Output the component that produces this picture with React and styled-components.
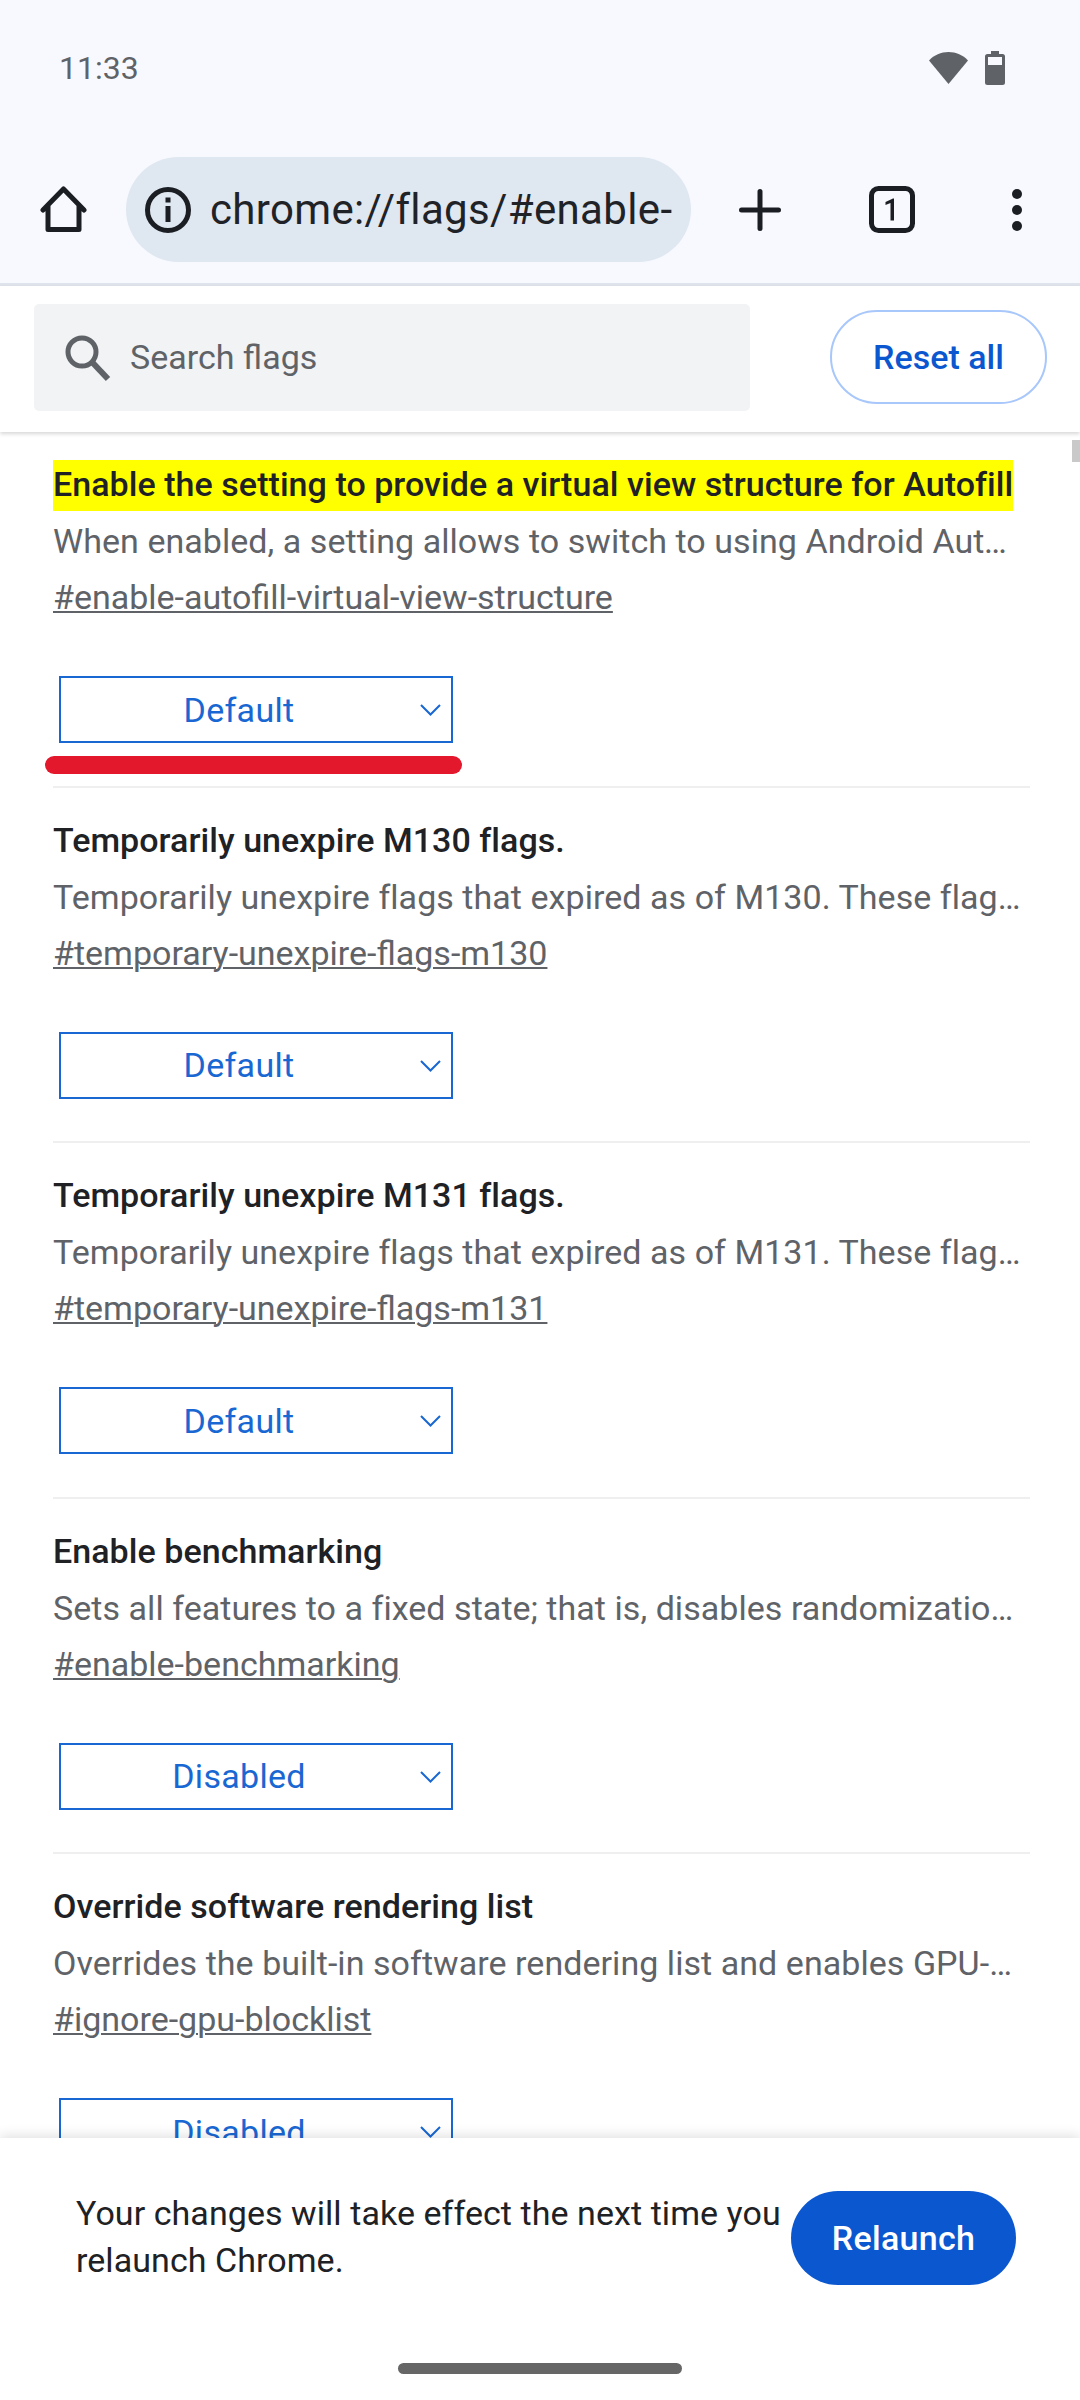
import React from "react";
import styled, { createGlobalStyle } from "styled-components";

const Global = createGlobalStyle`
  html, body { margin: 0; padding: 0; background: #fff; }
  * { box-sizing: border-box; }
  body { font-family: Roboto, "Liberation Sans", sans-serif; }
`;

const Screen = styled.div`
  width: 1080px; height: 2400px; display: flex; flex-direction: column;
  overflow: hidden; background: #fff; position: relative;
`;
const Chrome = styled.header`
  height: 286px; flex: none; background: #f8f9ff; border-bottom: 3px solid #dfe3ec;
  display: flex; flex-direction: column; position: relative; z-index: 2;
`;
const StatusBar = styled.div`
  height: 136px; flex: none; display: flex; justify-content: space-between; align-items: flex-start;
  padding: 46px 75px 0 59px;
`;
const Time = styled.span`font-size: 32px; line-height: 44px; color: #5f6368;`;
const StatusIcons = styled.div`display: flex; align-items: center; gap: 17px; height: 44px;`;
const Toolbar = styled.div`
  display: flex; align-items: center; height: 105px; margin-top: 21px; padding-left: 40px;
`;
const Pill = styled.div`
  width: 565px; height: 105px; margin-left: 39px; border-radius: 53px; background: #dfe7f0;
  display: flex; align-items: center; padding-left: 19px; gap: 19px; overflow: hidden;
`;
const Url = styled.span`font-size: 42px; line-height: 48px; color: #1f2328; white-space: nowrap; letter-spacing: 0.35px;`;
const PlusSlot = styled.div`margin-left: 48px; display: flex;`;
const TabSlot = styled.div`margin-left: 88px; display: flex;`;
const MenuSlot = styled.div`margin-left: 96px; display: flex;`;

const SearchHeader = styled.div`
  height: 146px; flex: none; background: #fff; display: flex; align-items: flex-start;
  padding: 18px 33px 0 34px; box-shadow: 0 2px 4px rgba(0,0,0,.16); position: relative; z-index: 2;
`;
const SearchBox = styled.div`
  width: 716px; height: 107px; background: #f1f3f4; border-radius: 5px;
  display: flex; align-items: center; padding-left: 30px; gap: 18px;
`;
const SearchLabel = styled.span`font-size: 34px; color: #5f6368; line-height: 38px; padding-bottom: 2px;`;
const ResetButton = styled.button`
  margin: 6px 0 0 auto; width: 217px; height: 94px; border-radius: 47px; background: #fff;
  border: 2px solid #a8c7fa; color: #0b57d0; font: 500 34px Roboto, sans-serif; padding: 0;
`;

const Main = styled.main`flex: 1; min-height: 0; overflow: hidden; position: relative; padding: 0 50px 0 53px;`;
const Thumb = styled.div`position: absolute; right: 0; top: 8px; width: 8px; height: 22px; background: #c9c9c9;`;
const Row = styled.article`
  height: 355.5px; padding-top: 28px; border-bottom: 2px solid #efefef; position: relative;
  &:last-child { border: 0; }
`;
const Title = styled.h3`
  margin: 0; font-size: 34px; font-weight: 500; line-height: 49px; color: #202124; height: 51px;
  letter-spacing: .05px;
  & mark { background: #ff0; color: inherit; display: inline-block; white-space: nowrap; padding-bottom: 2px; }
`;
const Desc = styled.p`
  margin: 5px 0 0; width: 970px; font-size: 34px; line-height: 50px; color: #5f6368; height: 50px;
  white-space: nowrap; overflow: hidden; text-overflow: ellipsis; letter-spacing: .05px;
`;
const Link = styled.a`
  display: inline-block; margin-top: 6px; font-size: 34px; line-height: 50px; color: #5f6368;
  text-decoration: underline; text-decoration-thickness: 2px; text-underline-offset: 2px;
`;
const SelectWrap = styled.div`position: absolute; left: 6px; top: 244px;`;
const Select = styled.div`
  width: 394px; height: 67px; border: 2px solid #1967d2; background: #fff; color: #1967d2;
  display: flex; align-items: center; position: relative; font-size: 34px; padding-right: 34px;
  justify-content: center; letter-spacing: .3px;
`;
const Caret = styled.svg`position: absolute; right: 10px; top: 26px; width: 21px; height: 12px;`;
const RedMark = styled.div`
  position: absolute; left: -14px; top: 80px; width: 417px; height: 18px; background: #e3182d; border-radius: 9px;
`;

const Footer = styled.footer`
  height: 262px; flex: none; background: #fff; position: relative; z-index: 2;
  box-shadow: 0 -2px 12px rgba(0,0,0,.13); padding: 0 64px 0 76px;
  display: flex; align-items: flex-start;
`;
const Notice = styled.p`margin: 52px 0 0; width: 715px; font-size: 34px; line-height: 47px; color: #202124; flex: none; white-space: nowrap; letter-spacing: .06px;`;
const Relaunch = styled.button`
  margin: 53px 0 0 auto; width: 225px; height: 94px; border: 0; border-radius: 47px;
  background: #0b57d0; color: #fff; font: 500 34px Roboto, sans-serif; padding: 0; letter-spacing: .3px;
`;
const HomeBar = styled.div`
  position: absolute; left: 398px; top: 225px; width: 284px; height: 11px; border-radius: 6px; background: #666;
`;

const flags = [
  { t: "Enable the setting to provide a virtual view structure for Autofill", d: "When enabled, a setting allows to switch to using Android Autofill with a virtual view structure", l: "#enable-autofill-virtual-view-structure", v: "Default", hl: true },
  { t: "Temporarily unexpire M130 flags.", d: "Temporarily unexpire flags that expired as of M130. These flags will be removed soon.", l: "#temporary-unexpire-flags-m130", v: "Default" },
  { t: "Temporarily unexpire M131 flags.", d: "Temporarily unexpire flags that expired as of M131. These flags will be removed soon.", l: "#temporary-unexpire-flags-m131", v: "Default" },
  { t: "Enable benchmarking", d: "Sets all features to a fixed state; that is, disables randomization for feature states.", l: "#enable-benchmarking", v: "Disabled" },
  { t: "Override software rendering list", d: "Overrides the built-in software rendering list and enables GPU-acceleration on unsupported configurations.", l: "#ignore-gpu-blocklist", v: "Disabled" },
];

const Flag = ({ t, d, l, v, hl }) => (
  <Row>
    <Title>{hl ? <mark>{t}</mark> : t}</Title>
    <Desc>{d}</Desc>
    <Link>{l}</Link>
    <SelectWrap>
      <Select>
        {v}
        <Caret viewBox="0 0 21 12" fill="none" stroke="#1967d2" strokeWidth="2"><path d="M1 1l9.500 9.500L20 1" /></Caret>
      </Select>
      {hl && <RedMark />}
    </SelectWrap>
  </Row>
);

export default function App() {
  return (
    <Screen>
      <Global />
      <Chrome>
        <StatusBar>
          <Time>11:33</Time>
          <StatusIcons>
            <svg width="39" height="32" viewBox="0 0 39 32"><path d="M19.5 32 0 8.5C5 3 12 0 19.5 0S34 3 39 8.5z" fill="#5f6368" /></svg>
            <svg width="20" height="34" viewBox="0 0 20 34"><path d="M6 0h8v3h3.500A2.500 2.500 0 0 1 20 5.500v26a2.500 2.500 0 0 1-2.500 2.500h-15A2.500 2.500 0 0 1 0 31.500v-26A2.500 2.500 0 0 1 2.500 3H6z" fill="#5f6368" /><rect x="3" y="6" width="14" height="8" fill="#f8f9ff" /></svg>
          </StatusIcons>
        </StatusBar>
        <Toolbar>
          <svg width="47" height="47" viewBox="0 0 47 47" fill="none" stroke="#1b1f24" strokeWidth="5" strokeLinejoin="round" strokeLinecap="round"><path d="M3 24 23.500 3 44 24M8 20v23.500h31V20" /></svg>
          <Pill>
            <svg width="46" height="46" viewBox="0 0 46 46"><circle cx="23" cy="23" r="20.500" fill="none" stroke="#1b1f24" strokeWidth="5" /><rect x="20.500" y="10.500" width="5" height="5" fill="#1b1f24" /><rect x="20.500" y="19" width="5" height="16" fill="#1b1f24" /></svg>
            <Url>chrome://flags/#enable-</Url>
          </Pill>
          <PlusSlot>
            <svg width="42" height="42" viewBox="0 0 42 42" stroke="#1b1f24" strokeWidth="5" strokeLinecap="round"><path d="M21 2.500v37M2.500 21h37" /></svg>
          </PlusSlot>
          <TabSlot>
            <svg width="46" height="47" viewBox="0 0 46 47"><rect x="2.500" y="2.500" width="41" height="42" rx="7" fill="none" stroke="#1b1f24" strokeWidth="5" /><path d="M25 12.500v22h-3.500V17l-5 2v-3l7.500-3.500z" fill="#1b1f24" /></svg>
          </TabSlot>
          <MenuSlot>
            <svg width="12" height="44" viewBox="0 0 12 44" fill="#1b1f24"><circle cx="6" cy="6" r="5" /><circle cx="6" cy="22" r="5" /><circle cx="6" cy="38" r="5" /></svg>
          </MenuSlot>
        </Toolbar>
      </Chrome>
      <SearchHeader>
        <SearchBox>
          <svg width="48" height="48" viewBox="0 0 48 48" fill="none" stroke="#5f6368" strokeWidth="5"><circle cx="18" cy="18" r="14" /><path d="M28 28l16 17" strokeWidth="6" /></svg>
          <SearchLabel>Search flags</SearchLabel>
        </SearchBox>
        <ResetButton>Reset all</ResetButton>
      </SearchHeader>
      <Main>
        <Thumb />
        {flags.map((f) => <Flag key={f.l} {...f} />)}
      </Main>
      <Footer>
        <Notice>Your changes will take effect the next time you<br />relaunch Chrome.</Notice>
        <Relaunch>Relaunch</Relaunch>
        <HomeBar />
      </Footer>
    </Screen>
  );
}
